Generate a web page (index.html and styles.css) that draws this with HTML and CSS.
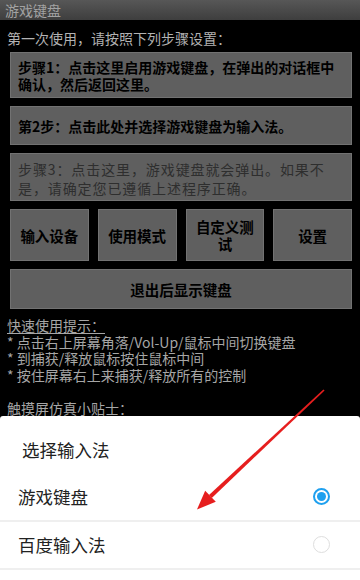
FILE: index.html
```html
<!DOCTYPE html>
<html lang="zh">
<head>
<meta charset="utf-8">
<title>游戏键盘</title>
<link rel="stylesheet" href="styles.css">
</head>
<body>
<div class="screen">
  <div class="titlebar">游戏键盘</div>
  <div class="content">
    <div class="intro">第一次使用，请按照下列步骤设置：</div>
    <div class="box box-step1"><span class="ink">步骤1：点击这里启用游戏键盘，在弹出的对话框中<br>确认，然后返回这里。</span></div>
    <div class="box box-step2"><span class="ink">第2步：点击此处并选择游戏键盘为输入法。</span></div>
    <div class="box box-step3 disabled"><span class="ink-dim">步骤3：点击这里，游戏键盘就会弹出。如果不<br>是，请确定您已遵循上述程序正确。</span></div>
    <div class="btn-row">
      <div class="btn"><span class="ink">输入设备</span></div>
      <div class="btn"><span class="ink">使用模式</span></div>
      <div class="btn"><span class="ink">自定义测<br>试</span></div>
      <div class="btn"><span class="ink">设置</span></div>
    </div>
    <div class="btn btn-wide"><span class="ink">退出后显示键盘</span></div>
    <div class="tips">
      <div class="tips-line tips-head">快速使用提示：</div>
      <div class="tips-line">* 点击右上屏幕角落/Vol-Up/鼠标中间切换键盘</div>
      <div class="tips-line">* 到捕获/释放鼠标按住鼠标中间</div>
      <div class="tips-line">* 按住屏幕右上来捕获/释放所有的控制</div>
      <div class="tips-blank"></div>
      <div class="tips-line tips-head">触摸屏仿真小贴士：</div>
    </div>
  </div>

  <div class="sheet">
    <div class="sheet-title">选择输入法</div>
    <div class="sheet-row">
      <span>游戏键盘</span>
      <span class="radio checked"></span>
    </div>
    <div class="sheet-row">
      <span>百度输入法</span>
      <span class="radio"></span>
    </div>
  </div>

  <svg class="arrow" width="360" height="580" viewBox="0 0 360 580">
    <polygon fill="#e61e1e" points="324.6,390.6 323.4,389.4 209,494.9 211.8,497.9"/>
    <polygon fill="#e61e1e" points="197,509.5 205.2,490.8 215.8,501.8"/>
  </svg>
</div>
</body>
</html>
```

FILE: styles.css
```css
* { box-sizing: border-box; }

html, body {
  margin: 0;
  padding: 0;
  background: #000;
}

body {
  font-family: "Noto Sans CJK SC", "Noto Sans", sans-serif;
}

.screen {
  position: relative;
  width: 360px;
  height: 580px;
  overflow: hidden;
  background: #000;
}

.titlebar {
  height: 20px;
  line-height: 20px;
  padding-left: 5px;
  font-size: 14px;
  color: #a2a2a2;
  background: linear-gradient(#575757, #3e3e3e);
}

.content {
  padding: 0 8px 0 10px;
}

.intro {
  margin-left: -3px;
  padding-top: 7px;
  line-height: 22px;
  font-size: 14px;
  color: #b2b2b2;
  margin-bottom: 3px;
}

.box {
  background-color: #5f5f5f;
  border: 1px solid #727272;
  font-size: 14px;
  font-weight: bold;
  margin-bottom: 8px;
  padding: 0 6px 0 7px;
  white-space: nowrap;
}

.ink {
  color: #000000;
}

.ink-dim {
  color: #2e2e2e;
}

.box-step1 {
  line-height: 17px;
  padding-top: 6px;
  height: 46px;
}

.box-step2 {
  line-height: 17px;
  padding-top: 11px;
  height: 39px;
}

.box-step3 {
  line-height: 18.5px;
  padding-top: 6px;
  height: 48px;
  letter-spacing: 0.9px;
  font-weight: normal;
}

.btn-row {
  display: grid;
  grid-template-columns: repeat(4, 1fr);
  gap: 9px;
  margin-bottom: 8px;
}

.btn {
  height: 52px;
  display: flex;
  align-items: center;
  justify-content: center;
  text-align: center;
  background-color: #5f5f5f;
  border: 1px solid #727272;
  font-size: 14.5px;
  font-weight: bold;
  line-height: 17px;
  padding: 0 4px;
}

.btn-wide {
  height: 40px;
}

.tips {
  margin-left: -3px;
  margin-top: 8px;
  font-size: 14px;
  color: #a6a6a6;
  white-space: nowrap;
}

.tips-line {
  height: 16.7px;
  line-height: 16.7px;
}

.tips-head {
  text-decoration: underline;
  text-underline-offset: 2px;
}

.tips-blank {
  height: 16.7px;
}

.sheet {
  position: absolute;
  left: 0;
  right: 0;
  top: 416px;
  bottom: 0;
  background: #fff;
  border-radius: 3px 3px 0 0;
}

.sheet-title {
  padding: 22px 0 12px 22px;
  line-height: 24px;
  font-size: 17.5px;
  color: #222;
}

.sheet-row {
  height: 48px;
  display: flex;
  align-items: center;
  justify-content: space-between;
  padding: 0 30px 2px 18px;
  border-bottom: 2px solid #efefef;
  font-size: 17.5px;
  color: #222;
}

.radio {
  width: 17px;
  height: 17px;
  border-radius: 50%;
  border: 1.5px solid #dedede;
  display: flex;
  align-items: center;
  justify-content: center;
}

.radio.checked {
  border: 2px solid #1ea0ef;
}

.radio.checked::after {
  content: "";
  width: 9px;
  height: 9px;
  border-radius: 50%;
  background: #1ea0ef;
}

.arrow {
  position: absolute;
  left: 0;
  top: 0;
  pointer-events: none;
}
```
